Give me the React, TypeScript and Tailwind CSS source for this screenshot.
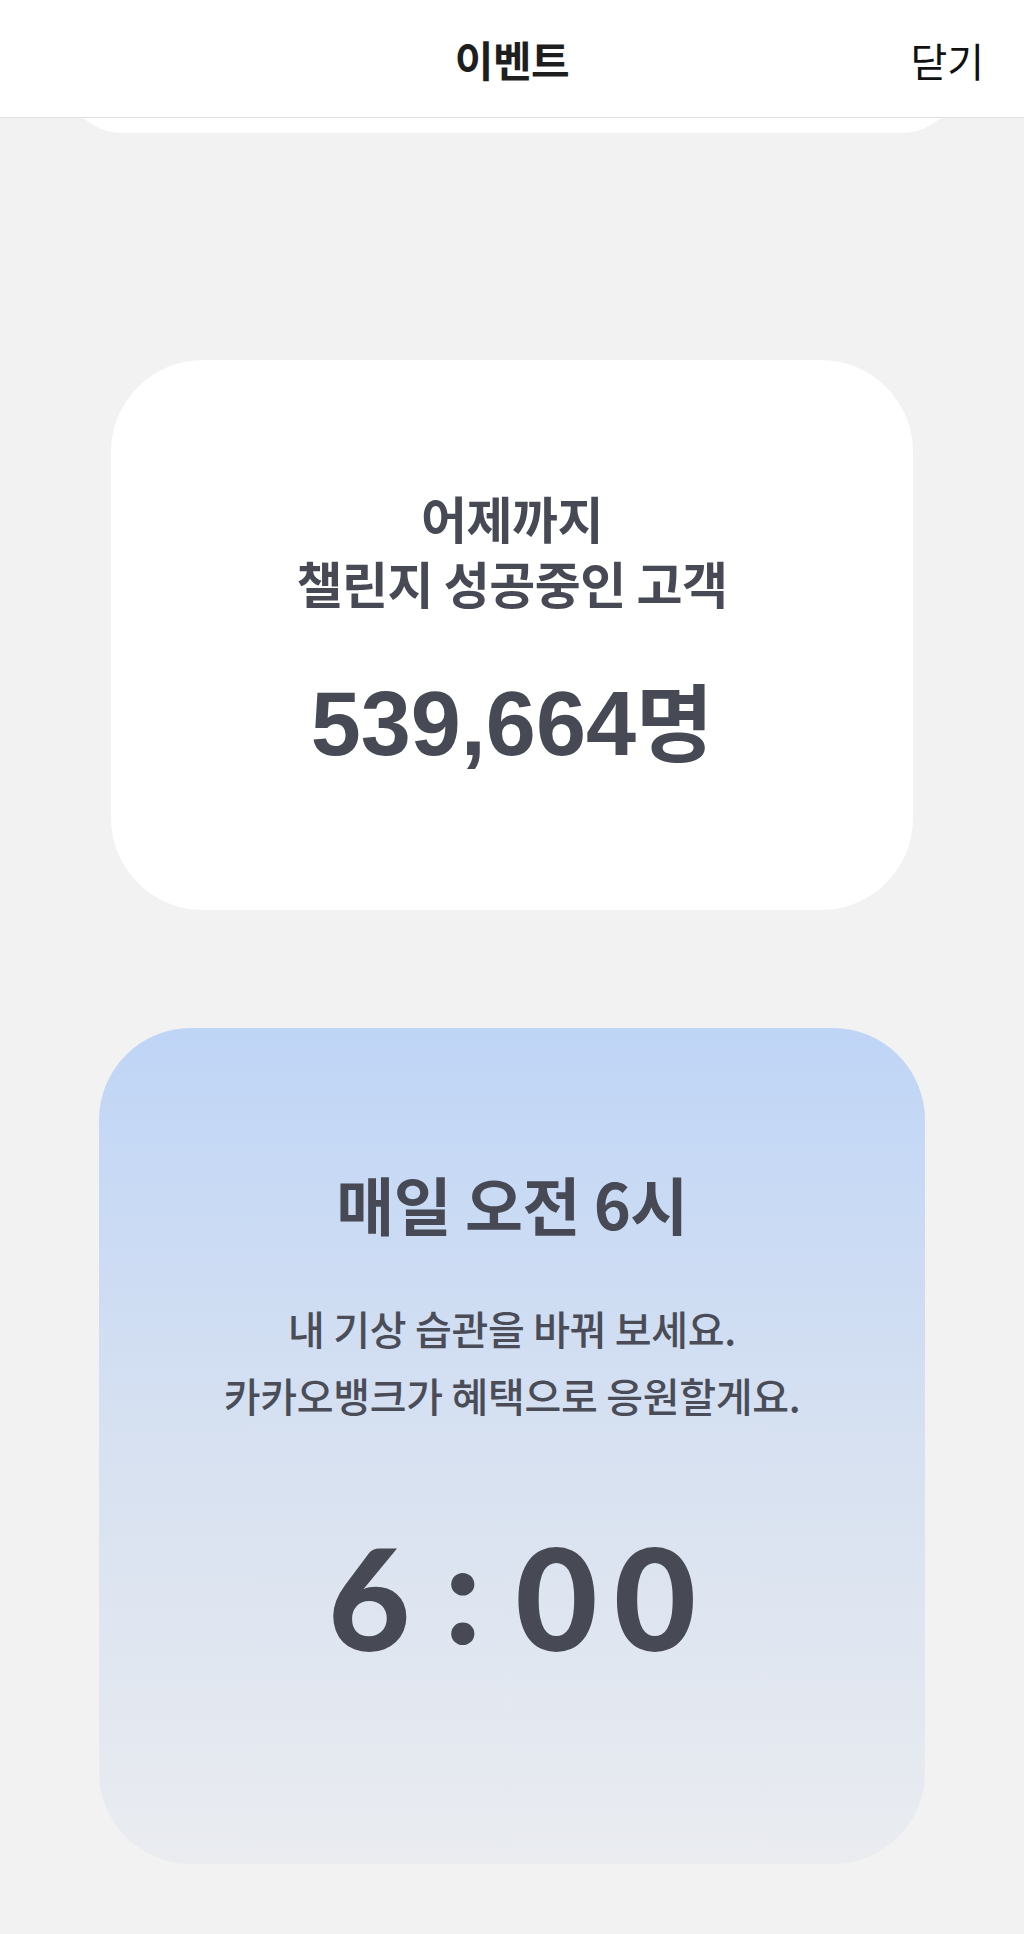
import React from "react";

const KR = "font-['Noto_Sans_CJK_KR','Noto_Sans',sans-serif]";

const Header = () => (
  <div className="relative z-10 flex items-center justify-center h-[118px] bg-white border-b border-[#e0e0e0]">
    <h1 className="text-[42px] font-bold text-[#1e1e1e] tracking-[-0.5px]">이벤트</h1>
    <button className="absolute right-[40px] top-[35px] text-[40px] font-normal leading-[50px] text-[#111111]">
      닫기
    </button>
  </div>
);

const App = () => {
  return (
    <div className={`min-h-[1934px] bg-[#f2f2f2] ${KR}`}>
      <Header />

      {/* bottom of the previous card, peeking out under the header */}
      <div className="h-[15px] mx-[63px] overflow-hidden">
        <div className="h-[200px] -mt-[185px] bg-white rounded-[60px]" />
      </div>

      <div className="flex flex-col items-center pt-[227px] pb-[70px]">
        <div className="flex flex-col items-center w-[802px] h-[550px] pt-[125px] bg-white rounded-[92px] text-[#474a55]">
          <p className="text-[50px] font-bold leading-[65px] text-center tracking-[-0.5px]">
            어제까지
            <br />
            챌린지 성공중인 고객
          </p>
          <p className="mt-[54px] leading-[100px] font-bold">
            <span className="font-['Liberation_Sans',sans-serif] text-[90px]">539,664</span>
            <span className="text-[84px]">명</span>
          </p>
        </div>

        <div className="flex flex-col items-center w-[826px] h-[836px] mt-[118px] pt-[140px] rounded-[92px] bg-gradient-to-b from-[#bfd5f6] via-[#d7e1f1] to-[#eaecf0] text-[#474a55]">
          <h2 className="text-[63px] font-bold leading-[70px] tracking-[-0.5px]">매일 오전 6시</h2>
          <p className="mt-[57px] text-[40px] font-medium leading-[67px] text-center text-[#4a4d57] tracking-[-0.3px]">
            내 기상 습관을 바꿔 보세요.
            <br />
            카카오뱅크가 혜택으로 응원할게요.
          </p>
          <div className="flex items-center gap-[34px] mt-[92px] h-[150px] font-['Lato',sans-serif] text-[142px] font-black text-[#474a55]">
            <span>6</span>
            <span className="-mt-[14px]">:</span>
            <span className="flex gap-[16px]">
              <span>0</span>
              <span>0</span>
            </span>
          </div>
        </div>
      </div>
    </div>
  );
};

export default App;
